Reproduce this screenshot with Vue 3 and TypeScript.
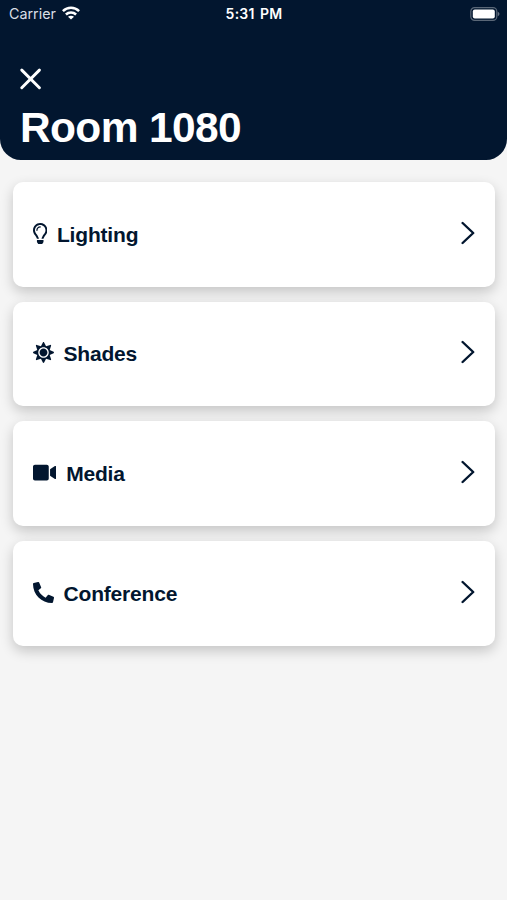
<script setup lang="ts">
interface RoomControl {
  label: string
  width: number
  path: string
}

const controls: RoomControl[] = [
  {
    label: 'Lighting',
    width: 352,
    path: 'M176 80c-52.94 0-96 43.06-96 96 0 8.84 7.16 16 16 16s16-7.16 16-16c0-35.3 28.72-64 64-64 8.84 0 16-7.16 16-16s-7.16-16-16-16zM96.06 459.17c0 3.15.93 6.22 2.68 8.84l24.51 36.84c2.97 4.46 7.97 7.14 13.32 7.14h78.85c5.36 0 10.36-2.68 13.32-7.14l24.51-36.84c1.74-2.62 2.67-5.7 2.68-8.84l.05-43.18H96.02l.04 43.18zM176 0C73.72 0 0 82.97 0 176c0 44.37 16.45 84.85 43.56 115.78 16.64 18.99 42.74 58.8 52.42 92.16v.06h48v-.12c-.01-4.77-.72-9.51-2.15-14.07-5.59-17.81-22.82-64.86-62.17-109.67-20.54-23.43-31.52-53.15-31.61-84.14-.2-73.64 59.67-128 127.95-128 70.58 0 128 57.42 128 128 0 30.97-11.24 60.85-31.65 84.14-39.11 44.61-56.42 91.47-62.1 109.46a47.507 47.507 0 0 0-2.22 14.3v.1h48v-.05c9.68-33.37 35.78-73.18 52.42-92.16C335.55 260.85 352 220.37 352 176 352 78.8 273.2 0 176 0z',
  },
  {
    label: 'Shades',
    width: 512,
    path: 'M256 160c-52.9 0-96 43.1-96 96s43.1 96 96 96 96-43.1 96-96-43.1-96-96-96zm246.4 80.5l-94.7-47.3 33.5-100.4c4.5-13.6-8.4-26.5-21.9-21.9l-100.4 33.5-47.4-94.8c-6.4-12.8-24.6-12.8-31 0l-47.3 94.7L92.7 70.8c-13.6-4.5-26.5 8.4-21.9 21.9l33.5 100.4-94.7 47.4c-12.8 6.4-12.8 24.6 0 31l94.7 47.3-33.5 100.5c-4.5 13.6 8.4 26.5 21.9 21.9l100.4-33.5 47.3 94.7c6.4 12.8 24.6 12.8 31 0l47.3-94.7 100.4 33.5c13.6 4.5 26.5-8.4 21.9-21.9l-33.5-100.4 94.7-47.3c13-6.5 13-24.7.2-31.1zm-155.9 106c-49.9 49.9-131.1 49.9-181 0-49.9-49.9-49.9-131.1 0-181 49.9-49.9 131.1-49.9 181 0 49.9 49.9 49.9 131.1 0 181z',
  },
  {
    label: 'Media',
    width: 576,
    path: 'M336.2 64H47.8C21.4 64 0 85.4 0 111.8v288.4C0 426.6 21.4 448 47.8 448h288.4c26.4 0 47.8-21.4 47.8-47.8V111.8c0-26.4-21.4-47.8-47.8-47.8zm189.4 37.7L416 177.3v157.4l109.6 75.5c21.2 14.6 50.4-.3 50.4-25.8V127.5c0-25.4-29.1-40.4-50.4-25.8z',
  },
  {
    label: 'Conference',
    width: 512,
    path: 'M497.39 361.8l-112-48a24 24 0 0 0-28 6.9l-49.6 60.6A370.66 370.66 0 0 1 130.6 204.11l60.6-49.6a23.94 23.94 0 0 0 6.9-28l-48-112A24.16 24.16 0 0 0 122.6.61l-104 24A24 24 0 0 0 0 48c0 256.5 207.9 464 464 464a24 24 0 0 0 23.4-18.6l24-104a24.29 24.29 0 0 0-14.01-27.6z',
  },
]
</script>

<template>
  <main class="screen">
    <header class="header">
      <div class="status">
        <div class="carrier">
          <span>Carrier</span>
          <svg class="wifi" viewBox="0 0 18 14" aria-hidden="true">
            <g fill="none" stroke="currentColor" stroke-width="2.5">
              <path d="M0.9 5.2C5.5 0.7 12.5 0.7 17.1 5.2" />
              <path d="M3.9 8.5C6.8 5.7 11.2 5.7 14.1 8.5" />
            </g>
            <path d="M9 13.6 6 10.8C7.6 9.3 10.4 9.3 12 10.8Z" fill="currentColor" />
          </svg>
        </div>
        <time class="clock">5:31 PM</time>
        <svg class="battery" viewBox="0 0 30 14" aria-hidden="true">
          <rect x="0.8" y="0.6" width="26" height="12.8" rx="3.8" fill="none" stroke="#fff" stroke-opacity="0.35" stroke-width="1.2" />
          <rect x="2.8" y="2.4" width="22" height="9.2" rx="2" fill="#fff" />
          <path d="M27.8 4.8C30 5.6 30 8.4 27.8 9.2Z" fill="#fff" fill-opacity="0.4" />
        </svg>
      </div>
      <button class="close" type="button" aria-label="Close">
        <svg viewBox="0 0 22 22" aria-hidden="true">
          <path d="M1.8 2.1 19.4 19.7M19.4 2.1 1.8 19.7" />
        </svg>
      </button>
      <h1 class="title">Room 1080</h1>
    </header>
    <nav class="list">
      <button v-for="c in controls" :key="c.label" class="card" type="button">
        <svg class="icon" :viewBox="`0 0 ${c.width} 512`" aria-hidden="true">
          <path :d="c.path" />
        </svg>
        <span class="label">{{ c.label }}</span>
        <svg class="chevron" viewBox="0 0 14 24" aria-hidden="true">
          <path d="M1.6 2 12.2 12 1.6 22" />
        </svg>
      </button>
    </nav>
  </main>
</template>

<style>
body {
  margin: 0;
  background: #f5f5f5;
}
</style>

<style scoped>
.screen {
  min-height: 900px;
  background: #f5f5f5;
  font-family: "Liberation Sans", Arial, sans-serif;
  color: #02162f;
}
.header {
  box-sizing: border-box;
  height: 159.5px;
  background: #02162f;
  border-radius: 0 0 21px 21px;
  color: #fff;
}
.status {
  display: grid;
  grid-template-columns: 1fr auto 1fr;
  align-items: center;
  height: 27px;
  padding: 0 7px 0 9px;
  font-family: Inter, sans-serif;
  font-size: 14.3px;
}
.carrier {
  display: flex;
  align-items: center;
  gap: 6px;
  color: #d9dfe6;
}
.wifi {
  width: 18px;
  height: 14px;
  margin-top: -1px;
  color: #fff;
}
.clock {
  margin-left: -1px;
  font-weight: 600;
  font-size: 14px;
  letter-spacing: 0.25px;
  word-spacing: 1.5px;
}
.battery {
  justify-self: end;
  width: 30px;
  height: 14px;
}
.close {
  display: block;
  width: 22px;
  height: 22px;
  margin: 41px 0 0 20px;
  padding: 0;
  border: 0;
  background: none;
}
.close svg {
  display: block;
  width: 22px;
  height: 22px;
  fill: none;
  stroke: #fff;
  stroke-width: 2.9;
  stroke-linecap: round;
}
.title {
  margin: 13px 0 0 20px;
  font-size: 42.5px;
  line-height: 49px;
  font-weight: 700;
  letter-spacing: -0.65px;
}
.list {
  display: flex;
  flex-direction: column;
  gap: 15px;
  padding: 22.4px 12.5px;
}
.card {
  display: flex;
  align-items: center;
  box-sizing: border-box;
  height: 104.7px;
  padding: 0 20px;
  border: 0;
  border-radius: 10px;
  background: #fff;
  box-shadow: 0 5px 13px rgba(0, 0, 0, 0.2);
  font: inherit;
  color: inherit;
  text-align: left;
}
.icon {
  height: 21px;
  flex: none;
  margin-top: -2px;
  fill: currentColor;
}
.label {
  flex: 1;
  margin-left: 10px;
  padding-top: 1px;
  font-size: 21px;
  line-height: 26px;
  font-weight: 700;
  letter-spacing: -0.18px;
}
.chevron {
  width: 14px;
  height: 24px;
  margin-top: -3px;
  fill: none;
  stroke: currentColor;
  stroke-width: 2.4;
  stroke-linecap: round;
  stroke-linejoin: round;
}
</style>
